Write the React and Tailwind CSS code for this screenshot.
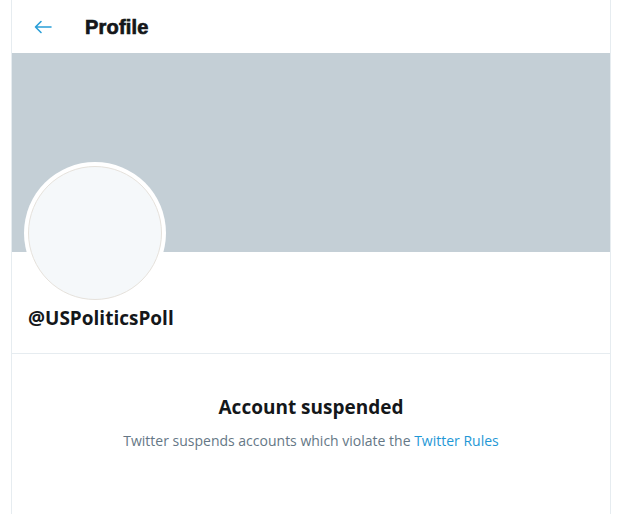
export default function App() {
  return (
    <div className="w-[620px] h-[514px] bg-white overflow-hidden" style={{ fontFamily: '"Open Sans", "Noto Sans", sans-serif' }}>
      <div className="ml-[11px] w-[600px] h-full border-x border-[#e6ecf0] flex flex-col">
        {/* Header */}
        <div className="h-[53px] flex items-center pl-[22px] shrink-0">
          <svg viewBox="0 0 18 14" className="w-[18px] h-[14px] text-[#2a9fd8]" fill="none" stroke="currentColor" strokeWidth="1.6" strokeLinecap="round" strokeLinejoin="round">
            <path d="M17 7H1.5M7 1.5L1.5 7L7 12.5" />
          </svg>
          <h1 className="ml-[33px] text-[20px] font-bold text-[#14171a] leading-none tracking-[0.2px] [-webkit-text-stroke:0.7px_#14171a]" style={{ fontFamily: '"Liberation Sans", Arial, sans-serif' }}>Profile</h1>
        </div>

        {/* Banner */}
        <div className="h-[199px] bg-[#c4cfd6] shrink-0" />

        {/* Avatar + handle */}
        <div className="px-[16px] pb-[23px] border-b border-[#e6ecf0]">
          <div className="-mt-[90px] -ml-[4px] w-[142px] h-[142px] rounded-full bg-white p-[4px]">
            <div className="w-full h-full rounded-full bg-[#f5f8fa] border border-[#e6e2dc]" />
          </div>
          <div className="mt-[2px] text-[19px] font-bold text-[#14171a] leading-[24px]">@USPoliticsPoll</div>
        </div>

        {/* Suspended message */}
        <div className="flex flex-col items-center pt-[41px]">
          <div className="text-[19px] font-bold text-[#14171a] leading-[24px]">Account suspended</div>
          <div className="mt-[12px] text-[14px] text-[#657786] leading-[20px]">
            Twitter suspends accounts which violate the <span className="text-[#1f98d6]">Twitter Rules</span>
          </div>
        </div>
      </div>
    </div>
  );
}
